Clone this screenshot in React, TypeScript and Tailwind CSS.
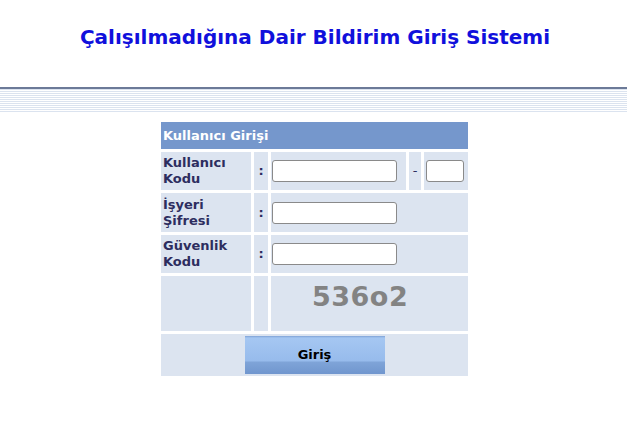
import React from "react";

const font = { fontFamily: '"DejaVu Sans", Verdana, sans-serif' };

// label cell on the left of each form row
const Label = ({ lines }: { lines: string[] }) => (
  <div className="bg-[#dce4f0] px-[2px] flex flex-col justify-center text-[13px] font-bold leading-[16px] text-[#2d2d5f]">
    {lines.map((l, i) => (
      <span key={i}>{l}</span>
    ))}
  </div>
);

const Colon = () => (
  <div className="bg-[#dce4f0] flex items-center justify-center text-[13px] font-bold text-[#2d2d5f]">
    :
  </div>
);

const TextInput = ({ w }: { w: string }) => (
  <input
    type="text"
    className={`${w} h-[22px] bg-white border border-[#8a8a8a] rounded-[3px] outline-none`}
  />
);

export default function App() {
  return (
    <div className="w-full min-h-screen bg-white" style={font}>
      <div className="h-[87px] flex justify-center pt-[25px] pl-[3px]">
        <h1 className="text-[20px] leading-[24px] font-bold text-[#1010dc]">
          Çalışılmadığına Dair Bildirim Giriş Sistemi
        </h1>
      </div>
      <div className="h-[2px] bg-[#6c7a98]" />
      <div className="h-[23px] bg-[repeating-linear-gradient(to_bottom,#dbe3ef_0px,#dbe3ef_1px,#ffffff_1px,#ffffff_2px)]" />

      <div className="flex justify-center pt-[10px] pl-[2px]">
        <div className="grid grid-cols-[90px_14px_135px_12px_44px] gap-[3px]">
          <div className="col-span-5 h-[27px] bg-[#7597cc] px-[2px] flex items-center text-[13px] font-bold text-white">
            Kullanıcı Girişi
          </div>

          {/* kullanıcı kodu */}
          <Label lines={["Kullanıcı", "Kodu"]} />
          <Colon />
          <div className="h-[38px] bg-[#dce4f0] flex items-center pl-[1px]">
            <TextInput w="w-[125px]" />
          </div>
          <div className="bg-[#dce4f0] flex items-center justify-center text-[13px] text-[#2d2d5f]">
            -
          </div>
          <div className="bg-[#dce4f0] flex items-center pl-[2px]">
            <TextInput w="w-[38px]" />
          </div>

          {/* işyeri şifresi */}
          <Label lines={["İşyeri", "Şifresi"]} />
          <Colon />
          <div className="col-span-3 h-[39px] bg-[#dce4f0] flex items-center pl-[1px]">
            <TextInput w="w-[125px]" />
          </div>

          {/* güvenlik kodu */}
          <Label lines={["Güvenlik", "Kodu"]} />
          <Colon />
          <div className="col-span-3 h-[38px] bg-[#dce4f0] flex items-center pl-[1px]">
            <TextInput w="w-[125px]" />
          </div>

          {/* captcha */}
          <div className="bg-[#dce4f0]" />
          <div className="bg-[#dce4f0]" />
          <div className="col-span-3 h-[55px] bg-[#dce4f0] pl-[41px] pt-[5px] text-[27px] leading-[32px] font-bold text-[#838383] tracking-[0.5px]">
            536o2
          </div>

          <div className="col-span-5 h-[42px] bg-[#dce4f0] flex items-center justify-center">
            <button className="w-[140px] h-[38px] text-[13px] font-bold text-black bg-[linear-gradient(to_bottom,#7fa2d6_0px,#a5c7f2_2px,#97bbec_25px,#7fa4d8_26px,#7096ce_100%)]">
              Giriş
            </button>
          </div>
        </div>
      </div>
    </div>
  );
}
